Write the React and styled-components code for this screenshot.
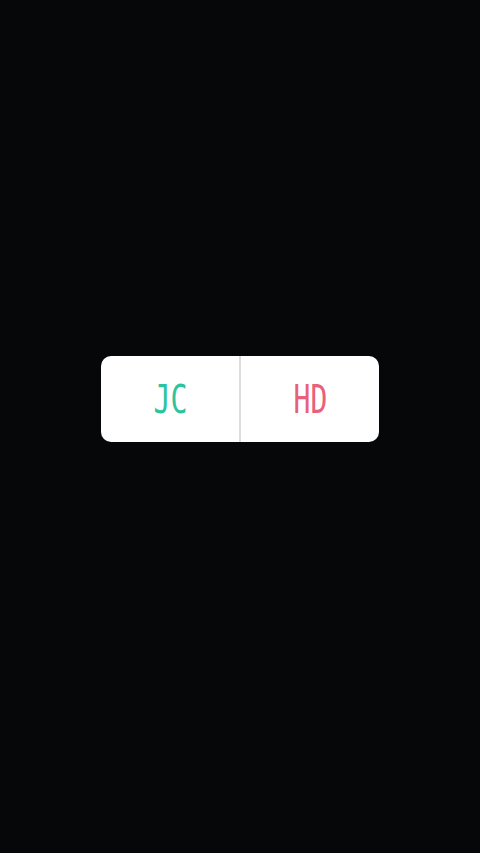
import React from "react";
import styled, { createGlobalStyle } from "styled-components";

const Global = createGlobalStyle`
  html, body {
    margin: 0;
    padding: 0;
    background: #060709;
  }
`;

function App() {
  return (
    <>
      <Global />
      <Screen>
        <Card>
          <Half>
            <Label color="#2dc3a0">JC</Label>
          </Half>
          <Divider />
          <Half>
            <Label color="#e9607a">HD</Label>
          </Half>
        </Card>
      </Screen>
    </>
  );
}

export default App;

const Screen = styled.div`
  width: 480px;
  height: 853px;
  background: #060709;
  display: flex;
  align-items: center;
  justify-content: center;
`;

const Card = styled.div`
  width: 278px;
  height: 86px;
  margin-top: -56px;
  background: #ffffff;
  border-radius: 10px;
  display: flex;
  overflow: hidden;
`;

const Half = styled.div`
  flex: 1;
  display: flex;
  align-items: center;
  justify-content: center;
`;

const Divider = styled.div`
  width: 2px;
  background: #dcdcdc;
`;

const Label = styled.span`
  display: inline-block;
  color: ${(p) => p.color};
  font-family: "DejaVu Sans Mono", "Liberation Mono", monospace;
  font-size: 39px;
  line-height: 1;
  transform: scaleX(0.72);
  margin-top: 2px;
`;
